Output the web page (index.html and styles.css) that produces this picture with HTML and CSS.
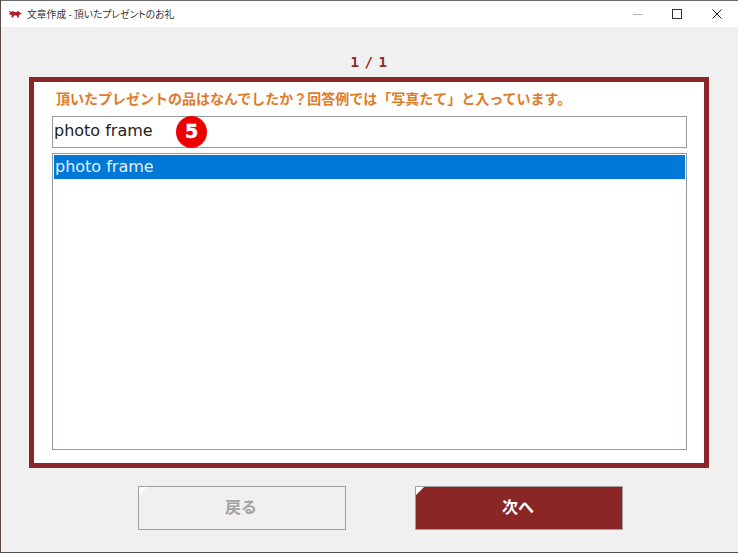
FILE: index.html
```html
<!DOCTYPE html>
<html lang="ja">
<head>
<meta charset="utf-8">
<title>文章作成 - 頂いたプレゼントのお礼</title>
<link rel="stylesheet" href="styles.css">
</head>
<body>
<div class="window">
  <header class="titlebar">
    <svg class="app-icon" width="13" height="8" viewBox="0 0 13 8"><path d="M0 0.500l3 1.500 1-1.500 1 1.500h3l1-1.500 1 1.500 3 1.500-3 1.500v2.500h-1.500l-1-2h-2.500l-1 2h-1.500v-2.500l-3-1 1.500-1z" fill="#b0202c"/></svg>
    <span class="title-text">文章作成 - 頂いたプレゼントのお礼</span>
    <div class="controls">
      <svg class="control" width="40" height="26" viewBox="0 0 40 26"><path d="M16 13.500h10" stroke="#b5b5b5" stroke-width="1"/></svg>
      <svg class="control" width="40" height="26" viewBox="0 0 40 26"><rect x="15.500" y="8.500" width="9" height="9" fill="none" stroke="#333" stroke-width="1"/></svg>
      <svg class="control" width="40" height="26" viewBox="0 0 40 26"><path d="M15.500 8.500l9 9M24.500 8.500l-9 9" stroke="#222" stroke-width="1"/></svg>
    </div>
  </header>
  <main class="content">
    <div class="pager">1 / 1</div>
    <section class="panel">
      <p class="question">頂いたプレゼントの品はなんでしたか？回答例では「写真たて」と入っています。</p>
      <div class="answer">
        photo frame
        <span class="badge">5</span>
      </div>
      <div class="listbox">
        <div class="list-item">photo frame</div>
      </div>
    </section>
    <div class="actions">
      <button class="btn btn-back" type="button">戻る</button>
      <button class="btn btn-next" type="button">次へ</button>
    </div>
  </main>
</div>
</body>
</html>
```
FILE: styles.css
```css
* { box-sizing: border-box; }
html, body { margin: 0; padding: 0; }
body {
  width: 738px;
  height: 553px;
  overflow: hidden;
  background: #5a4a44;
  font-family: "Noto Sans CJK JP", "Noto Sans", sans-serif;
}
.window {
  width: 737px;
  height: 552px;
  margin-left: 1px;
  border-top: 1px solid #6a6a6a;
  background: #f0f0f0;
  display: flex;
  flex-direction: column;
}
.titlebar {
  height: 26px;
  background: #fff;
  display: flex;
  align-items: center;
  padding-left: 8px;
  flex: none;
}
.app-icon { margin-right: 5px; }
.title-text { font-size: 9.8px; font-feature-settings: "palt"; color: #333; flex: 1; }
.controls { display: flex; padding-right: 1px; }
.control { display: block; }
.content {
  flex: 1;
  display: flex;
  flex-direction: column;
  padding: 0 29px 0 28px;
}
.pager {
  height: 50px;
  padding: 26px 2px 0 0;
  text-align: center;
  font-family: "DejaVu Sans Mono", monospace;
  font-weight: 700;
  font-size: 14px;
  letter-spacing: -1.4px;
  line-height: 18px;
  color: #8b2a2a;
  flex: none;
}
.panel {
  width: 680px;
  height: 391px;
  flex: none;
  background: #fff;
  border: 5px solid #8b2626;
  padding: 6px 17px 0 18px;
  display: flex;
  flex-direction: column;
}
.question {
  margin: 0 0 0 4px;
  height: 28px;
  font-size: 14px;
  line-height: 20px;
  font-weight: 700;
  color: #e07b28;
  white-space: nowrap;
}
.answer {
  position: relative;
  height: 32px;
  border: 1px solid #9a9a9a;
  background: #fff;
  padding-left: 1px;
  font-family: "DejaVu Sans", sans-serif;
  font-size: 16px;
  line-height: 27px;
  color: #222;
  flex: none;
}
.badge {
  position: absolute;
  left: 123px;
  top: -1px;
  width: 31px;
  height: 32px;
  border-radius: 50%;
  background: #ee0000;
  color: #fff;
  font-family: "DejaVu Sans", sans-serif;
  font-weight: 700;
  font-size: 19px;
  line-height: 31px;
  text-align: center;
  -webkit-text-stroke: 0.5px #fff;
}
.listbox {
  margin-top: 5px;
  height: 297px;
  border: 1px solid #8f9aa3;
  padding: 1px;
  background: #fff;
  flex: none;
}
.list-item {
  height: 24px;
  background: #0078d7;
  color: #e4effa;
  padding-left: 1px;
  font-family: "DejaVu Sans", sans-serif;
  font-size: 16px;
  line-height: 23px;
}
.actions {
  display: flex;
  gap: 69px;
  margin: 18px 0 0 109px;
}
.btn {
  position: relative;
  width: 208px;
  height: 44px;
  padding: 0 2px 4px 0;
  font-family: "Noto Sans CJK JP", sans-serif;
  font-weight: 700;
  font-size: 16px;
  border: 1px solid #a0a0a0;
}
.btn::before {
  content: "";
  position: absolute;
  left: 0;
  top: 0;
  width: 0;
  height: 0;
  border-top: 8px solid #fff;
  border-right: 8px solid transparent;
}
.btn-back { background: #f0f0f0; color: #a3a3a3; }
.btn-next { background: #8b2626; color: #fff; }
```
